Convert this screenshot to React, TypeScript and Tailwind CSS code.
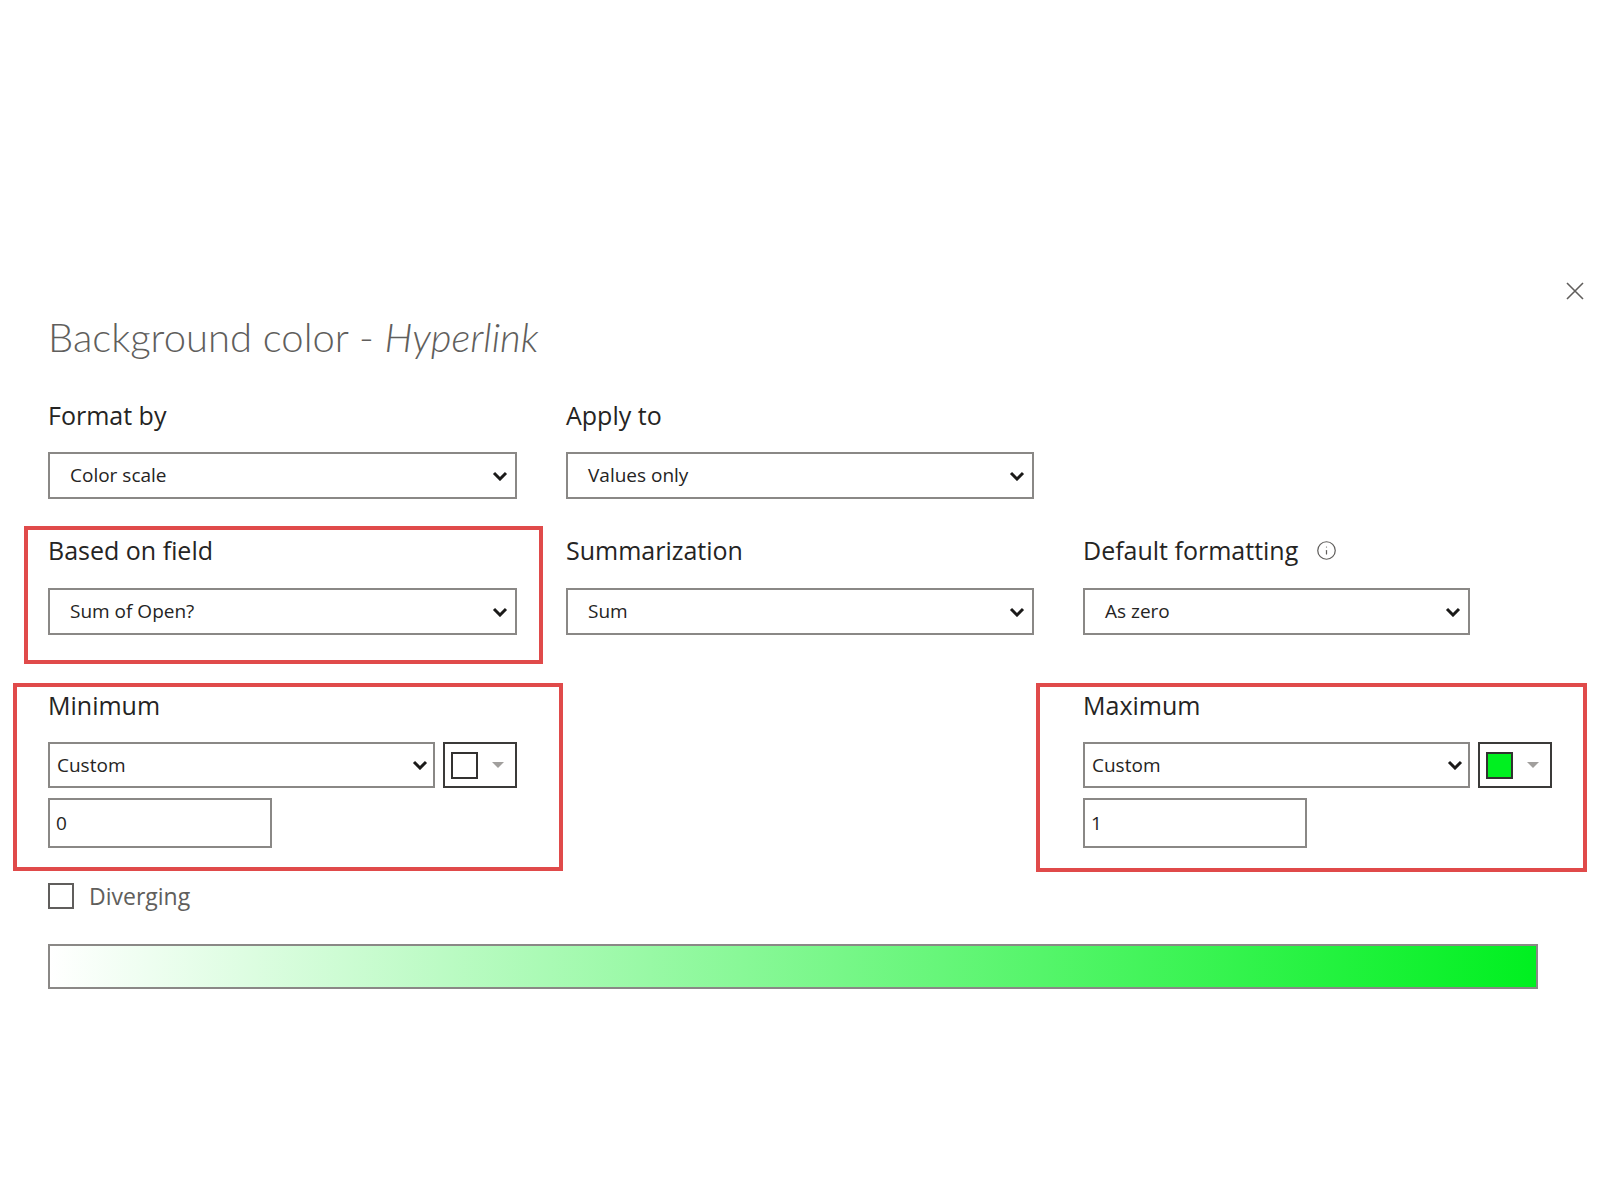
import React from "react"
import { Info } from "lucide-react"

function Chevron() {
  return (
    <svg width="16" height="10" viewBox="0 0 16 10" className="shrink-0">
      <path d="M2 2l6 6 6-6" fill="none" stroke="#1b1a19" strokeWidth="3" />
    </svg>
  )
}

function Select({ value, wide = true }: { value: string; wide?: boolean }) {
  return (
    <div
      className={
        wide
          ? "flex h-[47px] items-center justify-between border-2 border-[#8a8886] bg-white pl-[20px] pr-[7px] text-[19px] text-[#252423]"
          : "flex h-[46px] items-center justify-between border-2 border-[#8a8886] bg-white pl-[7px] pr-[5px] text-[19px] text-[#252423]"
      }
    >
      <span>{value}</span>
      <Chevron />
    </div>
  )
}

function Label({ children }: { children: React.ReactNode }) {
  return <div className="text-[25px] leading-[34px] text-[#252423]">{children}</div>
}

function ColorButton({ color }: { color: string }) {
  return (
    <div className="flex h-[46px] w-[74px] shrink-0 items-center border-2 border-[#3b3a39] bg-white pl-[6px]">
      <div className={"h-[27px] w-[27px] border-2 border-[#323130] " + color} />
      <svg width="12" height="6" viewBox="0 0 12 6" className="ml-[14px]">
        <path d="M0 0h12L6 6z" fill="#a19f9d" />
      </svg>
    </div>
  )
}

function RangeGroup({ title, value, color }: { title: string; value: string; color: string }) {
  return (
    <>
      <Label>{title}</Label>
      <div className="mt-[20px] flex gap-[8px]">
        <div className="w-[387px]">
          <Select value="Custom" wide={false} />
        </div>
        <ColorButton color={color} />
      </div>
      <div className="mt-[10px] flex h-[50px] w-[224px] items-center border-2 border-[#8a8886] pl-[6px] text-[19px] text-[#252423]">
        {value}
      </div>
    </>
  )
}

export default function App() {
  return (
    <div className="min-h-[1200px] w-full bg-white pt-[282px] font-['Open_Sans','Noto_Sans',sans-serif]">
      <div className="flex h-[18px] justify-end pr-[16px]">
        <svg width="18" height="18" viewBox="0 0 18 18">
          <path d="M1 1l16 16M17 1L1 17" stroke="#605e5c" strokeWidth="1.6" fill="none" />
        </svg>
      </div>

      <div className="pl-[48px]">
        <h1 className="mt-[13px] font-['Lato',sans-serif] text-[40px] font-light leading-[48px] text-[#605e5c]">
          Background color - <span className="italic">Hyperlink</span>
        </h1>

        <div className="mt-[37px] grid grid-cols-[469px_468px_387px] gap-x-[49px]">
          <div>
            <Label>Format by</Label>
            <div className="mt-[20px]">
              <Select value="Color scale" />
            </div>
          </div>
          <div>
            <Label>Apply to</Label>
            <div className="mt-[20px]">
              <Select value="Values only" />
            </div>
          </div>
          <div />
        </div>

        <div className="mt-[34px] grid grid-cols-[469px_468px_387px] gap-x-[49px]">
          <div className="relative">
            <Label>Based on field</Label>
            <div className="mt-[21px]">
              <Select value="Sum of Open?" />
            </div>
            <div className="pointer-events-none absolute bottom-[-29px] left-[-24px] right-[-26px] top-[-7px] border-4 border-[#e04a4a]" />
          </div>
          <div>
            <Label>Summarization</Label>
            <div className="mt-[21px]">
              <Select value="Sum" />
            </div>
          </div>
          <div>
            <div className="flex items-center gap-[18px]">
              <Label>Default formatting</Label>
              <Info size={21} strokeWidth={1.4} color="#605e5c" />
            </div>
            <div className="mt-[21px]">
              <Select value="As zero" />
            </div>
          </div>
        </div>

        <div className="mt-[53px] grid grid-cols-[469px_468px_387px] gap-x-[49px]">
          <div className="relative">
            <RangeGroup title="Minimum" value="0" color="bg-white" />
            <div className="pointer-events-none absolute bottom-[-23px] left-[-35px] right-[-46px] top-[-5px] border-4 border-[#e04a4a]" />
          </div>
          <div />
          <div className="relative w-[469px]">
            <RangeGroup title="Maximum" value="1" color="bg-[#00f020]" />
            <div className="pointer-events-none absolute bottom-[-24px] left-[-47px] right-[-35px] top-[-5px] border-4 border-[#e04a4a]" />
          </div>
        </div>

        <div className="mt-[35px] flex items-center gap-[15px]">
          <div className="h-[26px] w-[26px] border-2 border-[#605e5c] bg-white" />
          <span className="text-[23px] leading-[26px] text-[#605e5c]">Diverging</span>
        </div>

        <div className="mt-[35px] h-[45px] w-[1490px] border-2 border-[#8a8886] bg-[linear-gradient(to_right,#ffffff,#00f020)]" />
      </div>
    </div>
  )
}
